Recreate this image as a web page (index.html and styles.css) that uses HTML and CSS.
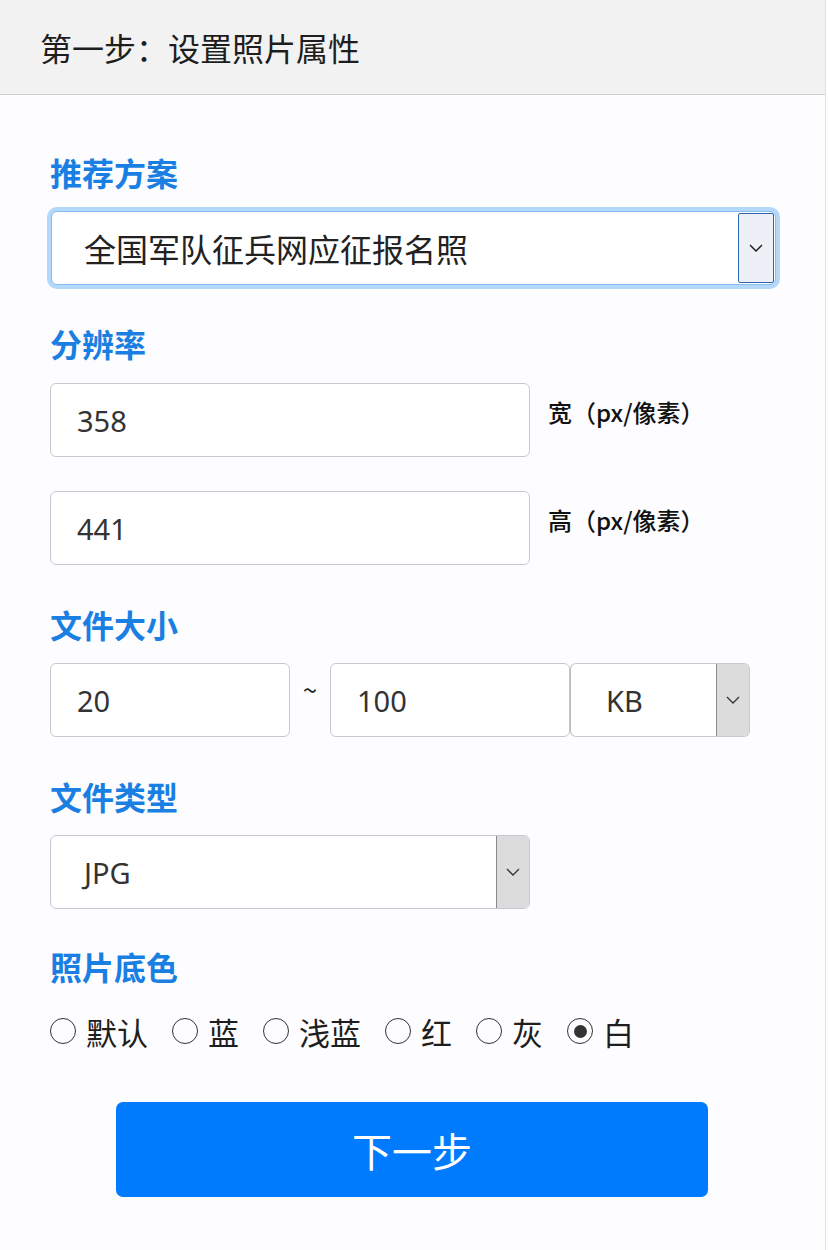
FILE: index.html
```html
<!DOCTYPE html>
<html lang="zh-CN">
<head>
<meta charset="utf-8">
<title>第一步：设置照片属性</title>
<link rel="stylesheet" href="styles.css">
</head>
<body>
<div class="page">
  <header class="header">第一步：设置照片属性</header>
  <main class="content">
    <section class="section first">
      <div class="label">推荐方案</div>
      <div class="select focus">
        <span class="select-text">全国军队征兵网应征报名照</span>
        <span class="arrow arrow-focus"><svg width="14" height="8" viewBox="0 0 14 8"><path d="M1 1 L7 7 L13 1" fill="none" stroke="#222" stroke-width="1.5"/></svg></span>
      </div>
    </section>

    <section class="section res">
      <div class="label">分辨率</div>
      <div class="res-row">
        <div class="input w480">358</div>
        <span class="unit">宽（px/像素）</span>
      </div>
      <div class="res-row second">
        <div class="input w480">441</div>
        <span class="unit">高（px/像素）</span>
      </div>
    </section>

    <section class="section">
      <div class="label">文件大小</div>
      <div class="size-row">
        <div class="input w240">20</div>
        <span class="tilde">~</span>
        <div class="input w240">100</div>
        <div class="select w180">
          <span class="select-text kb">KB</span>
          <span class="arrow"><svg width="14" height="8" viewBox="0 0 14 8"><path d="M1 1 L7 7 L13 1" fill="none" stroke="#333" stroke-width="1.3"/></svg></span>
        </div>
      </div>
    </section>

    <section class="section">
      <div class="label">文件类型</div>
      <div class="select w480">
        <span class="select-text jpg">JPG</span>
        <span class="arrow"><svg width="14" height="8" viewBox="0 0 14 8"><path d="M1 1 L7 7 L13 1" fill="none" stroke="#333" stroke-width="1.3"/></svg></span>
      </div>
    </section>

    <section class="section colors">
      <div class="label">照片底色</div>
      <div class="radios">
        <span class="radio"><span class="circle"></span>默认</span>
        <span class="radio"><span class="circle"></span>蓝</span>
        <span class="radio"><span class="circle"></span>浅蓝</span>
        <span class="radio"><span class="circle"></span>红</span>
        <span class="radio"><span class="circle"></span>灰</span>
        <span class="radio"><span class="circle checked"></span>白</span>
      </div>
    </section>

    <button class="next">下一步</button>
  </main>
</div>
</body>
</html>
```

FILE: styles.css
```css
html, body {
  margin: 0;
  padding: 0;
  background: #ffffff;
}
body {
  font-family: "Noto Sans CJK SC", "Noto Sans", sans-serif;
  color: #222;
}
.page {
  width: 825px;
  height: 1250px;
  background: #fdfcfe;
  border-right: 1px solid #e2e2e4;
}
.header {
  height: 95px;
  box-sizing: border-box;
  background: #f2f2f3;
  border-bottom: 1px solid #cfcfd1;
  padding-left: 40px;
  font-size: 32px;
  line-height: 95px;
  color: #1e1e1e;
}
.content {
  padding: 0 0 0 50px;
}
.section {
  margin-top: 39px;
}
.section.first {
  margin-top: 57px;
}
.section.res {
  margin-top: 38px;
}
.section.colors {
  margin-top: 37px;
}
.label {
  height: 40px;
  line-height: 40px;
  font-size: 32px;
  font-weight: 700;
  color: #1a7fe2;
  margin-bottom: 19px;
}
.res .label {
  margin-bottom: 20px;
}
.select {
  box-sizing: border-box;
  height: 74px;
  display: flex;
  align-items: stretch;
  background: #fff;
  border: 1px solid #c6cad0;
  border-radius: 6px;
  overflow: hidden;
}
.select.focus {
  width: 725px;
  margin-left: 1px;
  border: 1.5px solid #86bdf2;
  box-shadow: 0 0 0 4px #b4d8f8;
}
.select-text {
  flex: 1;
  display: flex;
  align-items: center;
  padding-left: 32px;
  font-size: 32px;
  color: #222;
}
.select-text.kb { padding-left: 35px; font-size: 29px; color: #333; font-family: "Noto Sans", "Noto Sans CJK SC", sans-serif; }
.select-text.jpg { padding-left: 33px; font-size: 29px; color: #333; font-family: "Noto Sans", "Noto Sans CJK SC", sans-serif; }
.arrow {
  width: 32px;
  display: flex;
  align-items: center;
  justify-content: center;
  background: #dcdcdc;
  border-left: 1px solid #8a8a8a;
}
.arrow-focus {
  width: 34px;
  background: #eef0f8;
  border: 1.5px solid #2a66b4;
  border-radius: 2px;
  margin: 1px 1px 1px 0;
}
.w480 { width: 480px; }
.w240 { width: 240px; }
.w180 { width: 180px; }
.input {
  box-sizing: border-box;
  height: 74px;
  background: #fff;
  border: 1px solid #c6cad0;
  border-radius: 6px;
  padding-left: 26px;
  display: flex;
  align-items: center;
  font-family: "Noto Sans", "Noto Sans CJK SC", sans-serif;
  font-size: 29px;
  color: #333;
}
.res-row {
  display: flex;
  align-items: flex-start;
}
.res-row.second {
  margin-top: 34px;
}
.unit {
  margin-left: 18px;
  margin-top: 11px;
  font-size: 24px;
  font-weight: 500;
  color: #111;
}
.size-row {
  display: flex;
  align-items: flex-start;
}
.tilde {
  width: 40px;
  text-align: center;
  font-size: 26px;
  line-height: 40px;
  margin-top: 6px;
  color: #222;
}
.size-row .w180 {
  border-left-color: #b8bcc4;
}
.radios {
  display: flex;
  align-items: center;
  height: 40px;
  margin-top: 25px;
  gap: 24px;
}
.radio {
  display: flex;
  align-items: center;
  font-size: 31px;
  color: #1e1e1e;
}
.circle {
  box-sizing: border-box;
  width: 26px;
  height: 26px;
  border: 1.6px solid #333;
  border-radius: 50%;
  margin-right: 10px;
  display: flex;
  align-items: center;
  justify-content: center;
}
.circle.checked::after {
  content: "";
  width: 13px;
  height: 13px;
  border-radius: 50%;
  background: #333;
}
.next {
  display: block;
  box-sizing: border-box;
  width: 592px;
  height: 95px;
  margin: 51px 0 0 66px;
  border: none;
  border-radius: 7px;
  background: #007bfd;
  color: #fff;
  font-family: "Noto Sans CJK SC", sans-serif;
  font-size: 40px;
  padding: 0;
}
```
